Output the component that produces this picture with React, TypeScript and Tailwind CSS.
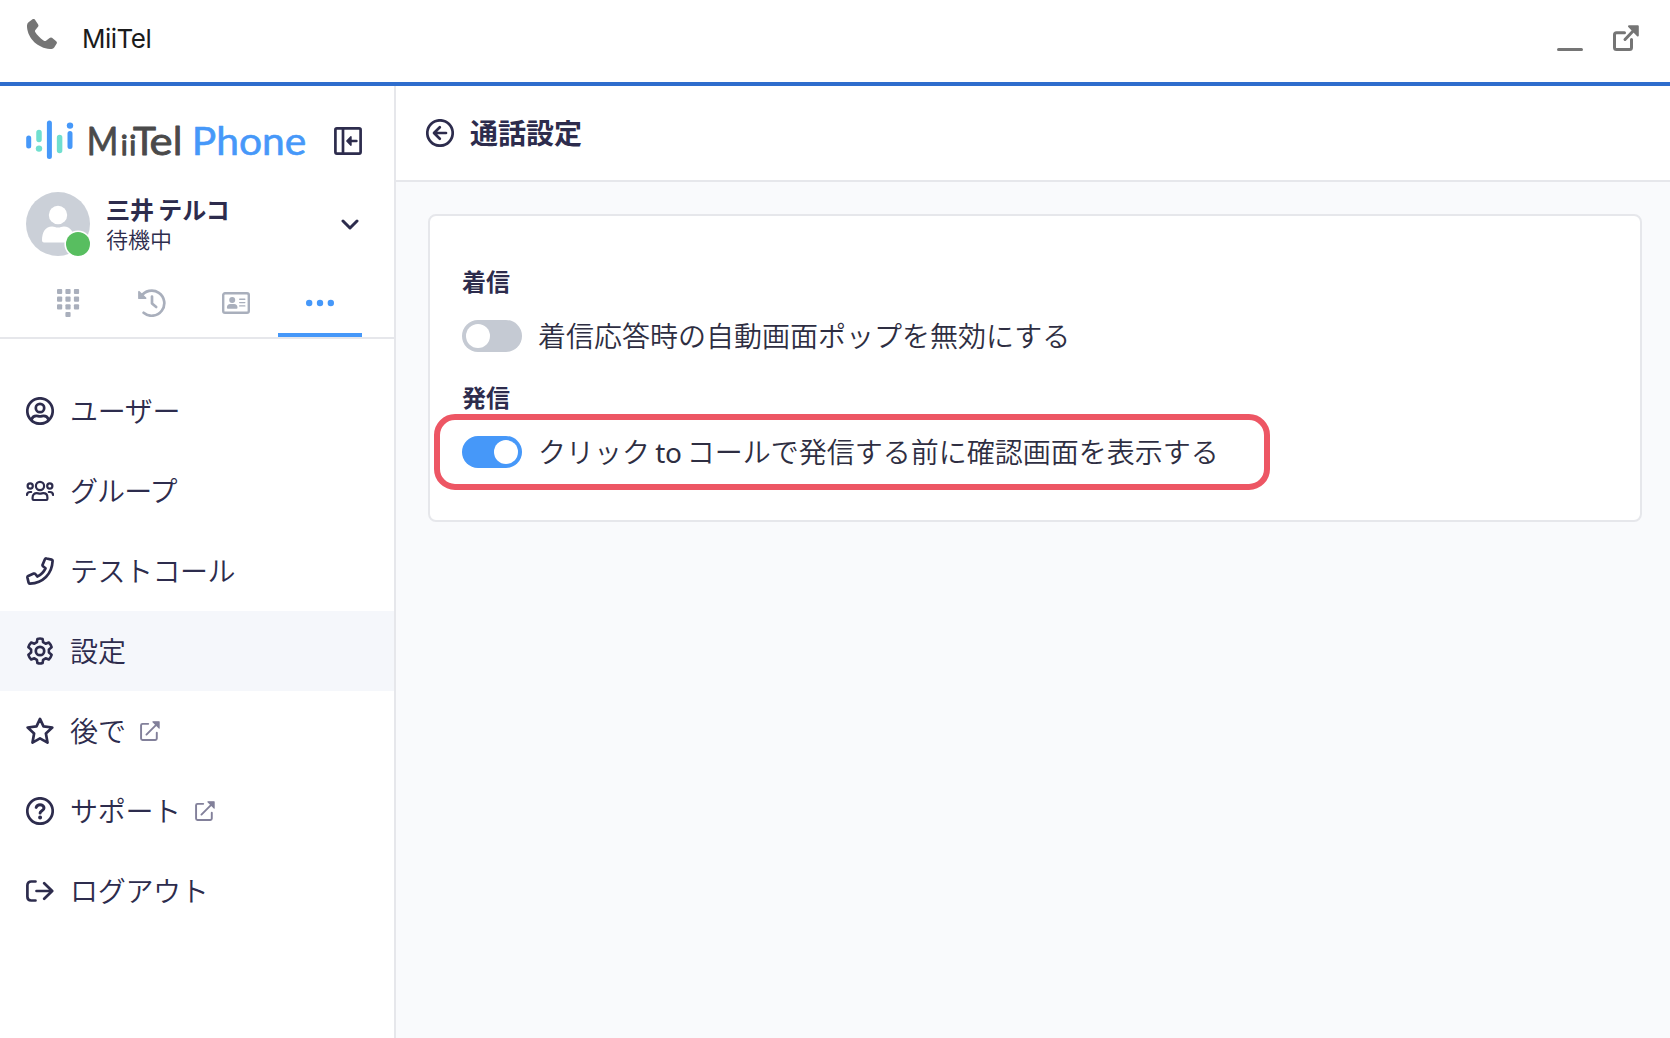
import type { ReactNode } from "react";

type IconProps = { children: ReactNode; size?: string; className?: string };

function Icon({ children, size = "size-7", className = "" }: IconProps) {
  return (
    <svg
      viewBox="0 0 28 28"
      fill="none"
      stroke="currentColor"
      strokeWidth="2.7"
      strokeLinecap="round"
      strokeLinejoin="round"
      className={`${size} shrink-0 ${className}`}
    >
      {children}
    </svg>
  );
}

const UserIcon = () => (
  <Icon>
    <circle cx="14" cy="14" r="12.7" />
    <circle cx="14" cy="11" r="4.2" />
    <path d="M5.5 22.5C6.4 20 8.2 18.9 10.3 18.9C11.8 18.9 12.4 19.4 14 19.4C15.6 19.4 16.2 18.9 17.7 18.9C19.8 18.9 21.6 20 22.5 22.5" />
  </Icon>
);

const GroupIcon = () => (
  <Icon>
    <g strokeWidth="2.2">
      <circle cx="14" cy="9" r="4.1" />
      <circle cx="4.2" cy="9" r="2.6" />
      <circle cx="23.8" cy="9" r="2.6" />
      <path d="M6.6 20.5V22C6.6 22.6 7 23 7.6 23H20.4C21 23 21.4 22.6 21.4 22V20.5C21.4 17.8 19.6 16.2 17.2 16.2C16 16.2 15.5 16.6 14 16.6C12.5 16.6 12 16.2 10.8 16.2C8.4 16.2 6.6 17.8 6.6 20.5Z" />
      <path d="M1 18C1 16 2.2 15 4 15H5.2M27 18C27 16 25.8 15 24 15H22.8" />
    </g>
  </Icon>
);

const HandsetIcon = () => (
  <Icon>
    <path d="M20.5 1.5L25.6 2.6C26.3 2.8 26.7 3.3 26.6 4C26 17 17 26 4 26.6C3.3 26.7 2.8 26.3 2.6 25.6L1.4 20.5C1.3 19.8 1.6 19.2 2.2 18.9L7.7 16.6C8.3 16.4 8.9 16.5 9.3 17L11.3 19.5C14.9 17.8 17.8 14.9 19.5 11.3L17 9.3C16.5 8.9 16.4 8.3 16.6 7.7L18.9 2.3C19.2 1.7 19.8 1.3 20.5 1.5Z" />
  </Icon>
);

const GearIcon = () => (
  <Icon>
    <path
      strokeWidth="2.6"
      d="M11.4 1.9Q14 1 16.6 1.9L17.1 5.2L19.6 6.7L22.8 5.5Q24.8 7.4 25.6 10.2L22.9 12.4V15.6L25.6 17.8Q24.8 20.6 22.8 22.5L19.6 21.3L17.1 22.8L16.6 26.1Q14 27 11.4 26.1L10.9 22.8L8.4 21.3L5.2 22.5Q3.2 20.6 2.4 17.8L5.1 15.6V12.4L2.4 10.2Q3.2 7.4 5.2 5.5L8.4 6.7L10.9 5.2Z"
    />
    <circle cx="14" cy="14" r="4.2" />
  </Icon>
);

const StarIcon = () => (
  <Icon>
    <path d="M14 1.9L17.5 9.3L26.3 10.5L19.9 16.4L21.5 25.6L14 21.4L6.5 25.6L8.1 16.4L1.7 10.5L10.5 9.3Z" />
  </Icon>
);

const HelpIcon = () => (
  <Icon>
    <circle cx="14" cy="14" r="12.7" />
    <path d="M10.2 10.4C10.8 8.6 12.2 7.8 14 7.8C16.2 7.8 18 9.1 18 11.1C18 13.7 14.1 13.9 14.1 16.1" strokeWidth="3" />
    <circle cx="14.1" cy="20.4" r="1.1" fill="currentColor" strokeWidth="1.8" />
  </Icon>
);

const LogoutIcon = () => (
  <Icon>
    <path d="M9.5 4.5H5.2C3 4.5 1.4 6 1.4 8.2V19.8C1.4 22 3 23.5 5.2 23.5H9.5M10.5 14H26M18.2 6.2L26.2 14L18.2 21.8" />
  </Icon>
);

const ExternalIcon = () => (
  <Icon size="size-5" className="text-[#82809a]">
    <path d="M11.5 4H3.5Q1.5 4 1.5 6V24.5Q1.5 26.5 3.5 26.5H21.5Q23.5 26.5 23.5 24.5V16.5M9 19L24 4" />
    <path d="M18 1.2H26.8V10Z" fill="currentColor" strokeWidth="1.5" />
  </Icon>
);

const BackIcon = () => (
  <Icon>
    <circle cx="14" cy="14" r="12.7" />
    <path d="M20 14H8.5M13.8 8.2L8 14L13.8 19.8" />
  </Icon>
);

const CollapseIcon = () => (
  <Icon>
    <rect x="1.4" y="1.4" width="25.2" height="25.2" rx="1.5" />
    <path d="M9 2V26" strokeLinecap="butt" />
    <path d="M15 14H22.5" strokeWidth="2.4" />
    <path d="M13 14L16.8 10V18Z" fill="currentColor" strokeWidth="1.8" />
  </Icon>
);

const DialpadIcon = () => (
  <Icon className="text-[#a9afbc]">
    <g fill="currentColor" stroke="none">
      {[0, 7.6, 15.3].map((y) =>
        [3, 11.4, 19.9].map((x) => <rect key={`${x}-${y}`} x={x} y={y} width="5.2" height="5.1" rx="1" />),
      )}
      <rect x="11.4" y="22.9" width="5.2" height="5.1" rx="1" />
    </g>
  </Icon>
);

const HistoryIcon = () => (
  <Icon className="text-[#a9afbc]">
    <path d="M3 7.5A12.6 12.6 0 1 1 5.6 23.8" />
    <path d="M1 2.8V9.2H7.5Z" fill="currentColor" strokeWidth="1.8" />
    <path d="M14 7.5V14.5L18.2 18" />
  </Icon>
);

const ContactIcon = () => (
  <Icon className="text-[#a9afbc]">
    <rect x="1.2" y="4.2" width="25.6" height="19.6" rx="1.8" strokeWidth="2.4" />
    <g fill="currentColor" stroke="none">
      <circle cx="10.2" cy="10.9" r="3" />
      <path d="M4.9 18.7C4.9 16.2 6.3 15 8.2 15H12.2C14.1 15 15.5 16.2 15.5 18.7Q15.5 19.8 14.5 19.8H5.9Q4.9 19.8 4.9 18.7Z" />
    </g>
    <path d="M17.7 10.3H22.8M17.7 13.6H22.8M17.7 16.9H22.8" strokeWidth="1.4" />
  </Icon>
);

const MoreIcon = () => (
  <Icon className="text-[#4698f9]">
    <g fill="currentColor" stroke="none">
      <circle cx="3.2" cy="14" r="3.2" />
      <circle cx="14" cy="14" r="3.2" />
      <circle cx="24.8" cy="14" r="3.2" />
    </g>
  </Icon>
);

function Logo() {
  return (
    <svg viewBox="0 -6 284 58" className="h-[58px] w-[284px]" fill="none">
      <g strokeWidth="5" strokeLinecap="round">
        <path d="M2.7 20V28M23.4 5V38.5M44 15.5V28.5" stroke="#4698f9" />
        <path d="M13 14.5V21.5M33.6 19.5V32.5" stroke="#70dfcf" strokeWidth="5.5" />
      </g>
      <circle cx="13" cy="30.6" r="3.2" fill="#70dfcf" />
      <circle cx="44" cy="7.6" r="3.2" fill="#4698f9" />
      <g fontFamily="Lato" fontSize="39" strokeLinejoin="round" strokeWidth="0.9">
        <g fill="#4a4a4a" stroke="#4a4a4a">
          <text x="60.8" y="36.5" textLength="31.5" lengthAdjust="spacingAndGlyphs">M</text>
          <text x="95 103.4" y="36.5" fontSize="27" strokeWidth="1.3">ii</text>
          <text x="107" y="36.5">T</text>
          <text x="123.6" y="36.5" textLength="23" lengthAdjust="spacingAndGlyphs">e</text>
          <text x="147" y="36.5">l</text>
        </g>
        <text x="165.8" y="36.5" fill="#4698f9" stroke="#4698f9" strokeWidth="0.6" textLength="114.5" lengthAdjust="spacingAndGlyphs">Phone</text>
      </g>
    </svg>
  );
}

function Avatar() {
  return (
    <svg viewBox="0 0 64 64" className="size-16 shrink-0">
      <circle cx="32" cy="32" r="32" fill="#cbd0d8" />
      <circle cx="32" cy="23" r="9.2" fill="#fff" />
      <path d="M16 48.5C16 40 19.5 34.5 26 34.5C28.5 34.5 29.5 35.6 32 35.6C34.5 35.6 35.5 34.5 38 34.5C44.5 34.5 48 40 48 48.5Q48 50.5 46 50.5H18Q16 50.5 16 48.5Z" fill="#fff" />
      <circle cx="52" cy="52" r="13.6" fill="#fff" />
      <circle cx="52" cy="52" r="12" fill="#58be60" />
    </svg>
  );
}

const menu = [
  { label: "ユーザー", icon: <UserIcon />, tracking: "tracking-[-0.3px]" },
  { label: "グループ", icon: <GroupIcon />, tracking: "tracking-[-0.9px]" },
  { label: "テストコール", icon: <HandsetIcon />, tracking: "tracking-[-0.5px]" },
  { label: "設定", icon: <GearIcon />, active: true },
  { label: "後で", icon: <StarIcon />, external: true },
  { label: "サポート", icon: <HelpIcon />, external: true, tracking: "tracking-[-0.3px]" },
  { label: "ログアウト", icon: <LogoutIcon />, tracking: "tracking-[-0.3px]" },
];

const tabs = [
  { id: "dialpad", icon: <DialpadIcon /> },
  { id: "history", icon: <HistoryIcon /> },
  { id: "contacts", icon: <ContactIcon /> },
  { id: "more", icon: <MoreIcon />, active: true },
];

function Sidebar() {
  return (
    <aside className="w-[396px] shrink-0 border-r-2 border-[#e6e7eb]">
      <div className="flex h-[253px] flex-col border-b-2 border-[#e6e7eb] px-[26px] pt-[26px]">
        <div className="flex items-center justify-between pr-1.5">
          <Logo />
          <button><CollapseIcon /></button>
        </div>
        <div className="mt-[22px] flex h-16 items-center">
          <Avatar />
          <div className="mb-0.5 ml-4 flex-1">
            <div className="text-2xl leading-8 font-bold">三井 テルコ</div>
            <div className="-mt-px text-[22px] leading-7 font-[350]">待機中</div>
          </div>
          <svg viewBox="0 0 18 12" className="mt-0.5 mr-[9px] h-3 w-[18px]" fill="none" stroke="currentColor" strokeWidth="3" strokeLinecap="round" strokeLinejoin="round">
            <path d="M2 2L9 9L16 2" />
          </svg>
        </div>
        <nav className="mt-auto flex">
          {tabs.map((tab) => (
            <button
              key={tab.id}
              className={`flex h-16 w-[84px] shrink-0 items-center justify-center border-b-4 ${tab.active ? "border-[#4698f9]" : "border-transparent"}`}
            >
              {tab.icon}
            </button>
          ))}
        </nav>
      </div>
      <ul className="pt-8">
        {menu.map((item) => (
          <li key={item.label} className={`flex h-20 items-center pl-[26px] ${item.active ? "bg-[#f5f7fb]" : ""}`}>
            {item.icon}
            <span className={`ml-4 text-[28px] leading-10 font-[350] ${item.tracking ?? ""}`}>{item.label}</span>
            {item.external && <span className="ml-3.5"><ExternalIcon /></span>}
          </li>
        ))}
      </ul>
    </aside>
  );
}

function Setting({ children, on = false }: { children: ReactNode; on?: boolean }) {
  return (
    <label className="flex h-8 items-center">
      <span className={`flex h-8 w-[60px] rounded-full p-1 ${on ? "justify-end bg-[#4698f9]" : "bg-[#c5cad3]"}`}>
        <span className="size-6 rounded-full bg-white" />
      </span>
      <span className="ml-4 text-[28px] leading-8 font-[350] text-[#2e2e42]">{children}</span>
    </label>
  );
}

export default function App() {
  return (
    <div className="flex h-[1038px] w-[1670px] flex-col overflow-hidden bg-white font-['Noto_Sans','Noto_Sans_CJK_JP',sans-serif] text-[#2d2c4d] [word-spacing:-2px]">
      <header className="flex h-[86px] shrink-0 items-center border-b-4 border-[#2e6dcd] pr-[31px] pl-[27px] text-[#757575]">
        <svg viewBox="0 0 30 30" className="mb-3.5 size-[30px]" fill="currentColor">
          <path d="M5.5 .2L1.5 3.2Q-.3 4.6 0 8C1 20 11 29 23 30Q26 30.3 27.2 28.5L29.7 24.5Q30.3 23.2 29.2 22.2L25 18.8Q23.8 18 22.6 18.9L19 21.7Q18 22.3 16.5 21.4C12.8 18.8 10 16 8.2 13Q7.6 11.9 8.4 11L11 7.8Q11.9 6.5 11 5.2L8 .7Q7-.6 5.5 .2Z" />
        </svg>
        <h1 className="mt-[-4px] ml-[25px] font-['Inter'] text-[26px] leading-8 font-normal tracking-[-0.5px] text-[#1b1b1b]">MiiTel</h1>
        <div className="ml-auto flex items-end gap-[30px] pb-1.5">
          <span className="h-[3px] w-[26px] rounded-full bg-[#757575]" />
          <svg viewBox="0 0 26 26" className="size-[26px]" fill="none" stroke="currentColor" strokeWidth="3" strokeLinecap="round" strokeLinejoin="round">
            <path d="M11.5 7.8H3.5Q1.5 7.8 1.5 9.8V22.5Q1.5 24.5 3.5 24.5H16.5Q18.5 24.5 18.5 22.5V14.5M12 14.5L23 3" />
            <path d="M16 1.2H24.8V10.5Z" fill="currentColor" strokeWidth="2" />
          </svg>
        </div>
      </header>
      <div className="flex min-h-0 flex-1">
        <Sidebar />
        <main className="flex-1 bg-[#f9fafc]">
          <div className="flex h-24 items-center border-b-2 border-[#e6e7eb] bg-white pl-[30px]">
            <BackIcon />
            <h2 className="ml-4 text-[28px] leading-10 font-bold">通話設定</h2>
          </div>
          <div className="p-8 pr-7">
            <section className="relative h-[308px] rounded-lg border-2 border-[#e6e7eb] bg-white px-8 pt-12">
              <h3 className="mb-5 text-2xl leading-9 font-bold">着信</h3>
              <Setting>着信応答時の自動画面ポップを無効にする</Setting>
              <h3 className="mt-7 mb-5 text-2xl leading-9 font-bold">発信</h3>
              <Setting on>
                クリック <span className="font-normal tracking-[-0.4px]">to</span> コールで発信する前に確認画面を表示する
              </Setting>
              <div className="absolute top-[198px] left-1 h-[76px] w-[836px] rounded-[21px] border-6 border-[#ed5664]" />
            </section>
          </div>
        </main>
      </div>
    </div>
  );
}
